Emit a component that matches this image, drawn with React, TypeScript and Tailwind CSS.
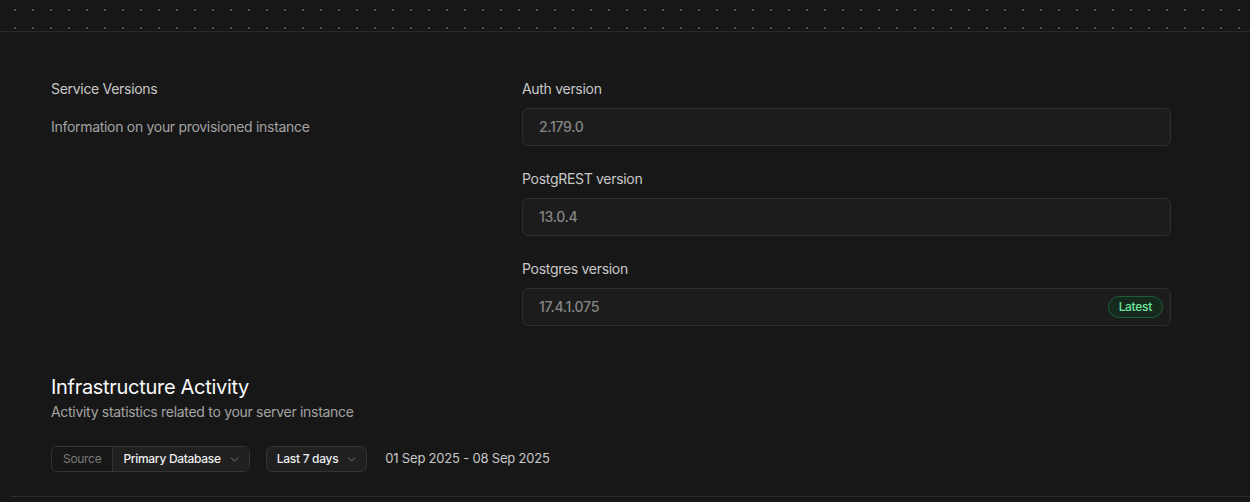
import { ChevronDown } from 'lucide-react'

type VersionFieldProps = {
  label: string
  value: string
  latest?: boolean
}

function VersionField({ label, value, latest = false }: VersionFieldProps) {
  return (
    <div className="flex flex-col">
      <label className="h-[20px] text-sm leading-[20px] text-[#c8c8c8]">{label}</label>
      <div className="mt-[9px] flex h-[38px] items-center justify-between rounded-md border border-[#2e2e2e] bg-[#1c1c1c] pl-4 pr-[7px]">
        <span className="text-sm font-medium text-[#858585]">{value}</span>
        {latest && (
          <span className="flex h-[22px] items-center rounded-full border border-[#1c5d38] bg-[#15291d] px-[10px] text-xs font-medium text-[#6ee7a0]">
            Latest
          </span>
        )}
      </div>
    </div>
  )
}

export default function App() {
  return (
    <div className="h-[502px] overflow-hidden bg-[#171717] font-['Inter',sans-serif] tracking-[-0.3px] antialiased">
      <div className="h-[31px] bg-[radial-gradient(circle,#505050_0.8px,transparent_1.2px)] bg-[size:18px_18px] bg-[position:6px_1px]" />
      <div className="h-px bg-[#2a2a2a]" />

      <div className="flex pl-[51px] pt-[47px]">
        <div className="w-[471px]">
          <h3 className="h-[20px] text-sm leading-[20px] text-[#c8c8c8]">Service Versions</h3>
          <p className="mt-[18px] text-sm leading-[20px] text-[#a3a3a3]">
            Information on your provisioned instance
          </p>
        </div>
        <div className="flex w-[649px] flex-col gap-[23px]">
          <VersionField label="Auth version" value="2.179.0" />
          <VersionField label="PostgREST version" value="13.0.4" />
          <VersionField label="Postgres version" value="17.4.1.075" latest />
        </div>
      </div>

      <section className="pl-[51px] pt-[48px]">
        <h2 className="text-xl leading-[26px] text-[#fafafa]">Infrastructure Activity</h2>
        <p className="mt-[2px] text-sm leading-[20px] text-[#a3a3a3]">
          Activity statistics related to your server instance
        </p>

        <div className="mt-[24px] flex items-center">
          <div className="flex h-[26px] items-stretch overflow-hidden rounded-md border border-[#343434] text-xs">
            <span className="flex items-center bg-[#171717] px-[11px] text-[#7a7a7a]">Source</span>
            <button className="flex items-center gap-[7px] border-l border-[#343434] bg-[#202020] pl-[10px] pr-[8px] font-medium text-[#ededed]">
              Primary Database
              <ChevronDown size={13} strokeWidth={1.5} className="text-[#8a8a8a]" />
            </button>
          </div>
          <button className="ml-[16px] flex h-[26px] items-center gap-[7px] rounded-md border border-[#343434] bg-[#202020] pl-[10px] pr-[8px] text-xs font-medium text-[#ededed]">
            Last 7 days
            <ChevronDown size={13} strokeWidth={1.5} className="text-[#8a8a8a]" />
          </button>
          <span className="ml-[18px] text-[13px] tracking-[-0.2px] text-[#c8c8c8]">01 Sep 2025 - 08 Sep 2025</span>
        </div>
      </section>

      <div className="ml-[11px] mt-[24px] h-px bg-[#2a2a2a]" />
    </div>
  )
}
